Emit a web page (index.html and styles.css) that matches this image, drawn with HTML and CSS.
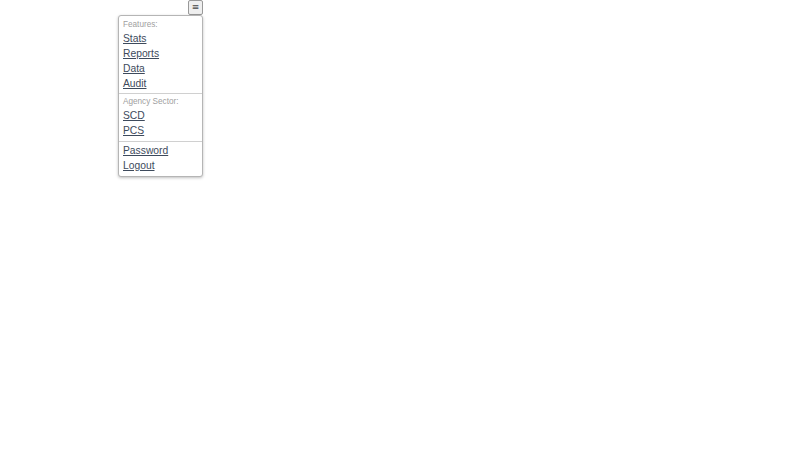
FILE: index.html
```html
<!DOCTYPE html>
<html>
<head>
<meta charset="utf-8">
<link rel="stylesheet" href="styles.css">
</head>
<body>
<div class="bar">
  <span class="toggle">&#8801;</span>
  <div class="dropdown">
    <div class="section">
      <div class="label">Features:</div>
      <div class="item"><a href="#stats">Stats</a></div>
      <div class="item"><a href="#reports">Reports</a></div>
      <div class="item"><a href="#data">Data</a></div>
      <div class="item"><a href="#audit">Audit</a></div>
    </div>
    <div class="section mid">
      <div class="label">Agency Sector:</div>
      <div class="item"><a href="#scd">SCD</a></div>
      <div class="item"><a href="#pcs">PCS</a></div>
    </div>
    <div class="section last">
      <div class="item"><a href="#password">Password</a></div>
      <div class="item"><a href="#logout">Logout</a></div>
    </div>
  </div>
</div>
</body>
</html>
```
FILE: styles.css
```css
html, body {
  margin: 0;
  padding: 0;
  background: #ffffff;
  font-family: "Liberation Sans", Arial, sans-serif;
}
html {
  height: 100%;
}
body {
  min-height: 100%;
}
.bar {
  width: 203px;
  display: flex;
  flex-direction: column;
  align-items: flex-end;
}
.toggle {
  box-sizing: border-box;
  width: 15px;
  height: 15px;
  border: 1px solid #999;
  border-radius: 2px;
  background: #efefef;
  color: #444;
  font-family: "DejaVu Sans", sans-serif;
  font-size: 9px;
  line-height: 13px;
  text-align: center;
}
.dropdown {
  box-sizing: border-box;
  width: 85px;
  background: #fff;
  border: 1px solid #b5b5b5;
  border-radius: 3px;
  box-shadow: 0 1px 3px rgba(0,0,0,0.25);
}
.section {
  padding: 2px 0 3px 4px;
  border-bottom: 1px solid #d0d0d0;
}
.section:first-child {
  padding-top: 3px;
  padding-bottom: 2px;
}
.section.mid {
  padding-top: 2px;
  padding-bottom: 3px;
}
.section.last {
  border-bottom: none;
  padding-top: 1px;
  padding-bottom: 3px;
}
.label {
  font-size: 8.2px;
  line-height: 12px;
  color: #a0a0a0;
}
.item {
  font-size: 10.3px;
  line-height: 15px;
}
.item a {
  color: #3d4a5c;
  text-decoration: underline;
}
```
